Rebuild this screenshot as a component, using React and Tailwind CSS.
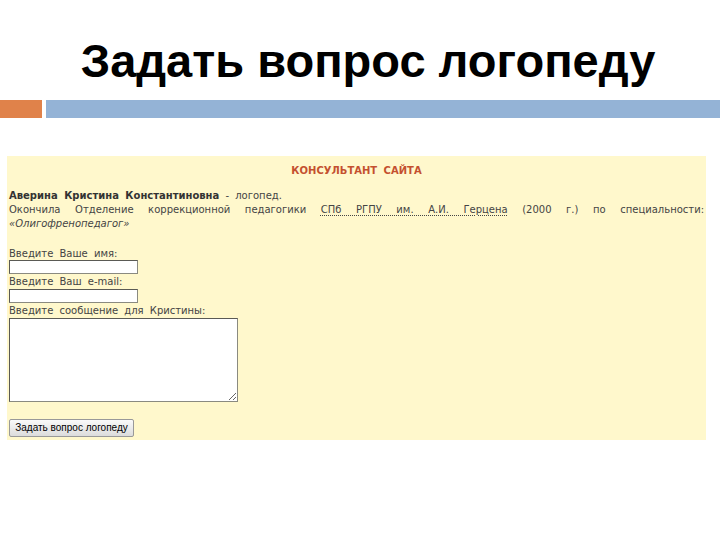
export default function App() {
  const body = "font-['DejaVu_Sans',Verdana,sans-serif] text-[10px] text-[#444] [word-spacing:3px]";
  const field = "bg-white border border-[#8a8a80] border-t-[#5a5a55] border-l-[#5a5a55]";

  return (
    <div className="w-[720px] h-[540px] bg-white overflow-hidden">
      <h1 className="pt-[33px] pl-[16px] h-[100px] text-center font-['Liberation_Sans',Arial,sans-serif] font-bold text-[47px] leading-[56px] text-black">
        Задать вопрос логопеду
      </h1>

      <div className="flex gap-[4px] h-[18px]">
        <div className="w-[42px] bg-[#e0824a]" />
        <div className="flex-1 bg-[#94b3d6]" />
      </div>

      <div className={`mt-[38px] ml-[7px] w-[699px] h-[284px] bg-[#fff8cc] px-[2px] pt-[8px] ${body}`}>
        <div className="text-center font-bold text-[#c4502f] leading-[14px]">КОНСУЛЬТАНТ САЙТА</div>

        <div className="mt-[11px] leading-[14px]">
          <b className="text-[#333]">Аверина Кристина Константиновна</b> - логопед.
        </div>
        <p className="leading-[14px] text-justify [text-align-last:left]">
          Окончила Отделение коррекционной педагогики{" "}
          <span className="underline decoration-dotted underline-offset-2">СПб РГПУ им. А.И. Герцена</span>{" "}
          (2000 г.) по специальности: <i>«Олигофренопедагог»</i>
        </p>

        <form className="mt-[16px] flex flex-col items-start" onSubmit={(e) => e.preventDefault()}>
          <label className="leading-[13px]">Введите Ваше имя:</label>
          <input className={`w-[129px] h-[14px] ${field}`} />
          <label className="leading-[15px]">Введите Ваш e-mail:</label>
          <input className={`w-[129px] h-[14px] ${field}`} />
          <label className="leading-[15px]">Введите сообщение для Кристины:</label>
          <textarea className={`w-[229px] h-[84px] resize ${field}`} />
          <button
            type="submit"
            className="mt-[17px] h-[18px] w-[125px] border border-[#999] rounded-[2px] bg-gradient-to-b from-[#fafafa] to-[#dcdcdc] font-['Liberation_Sans',Arial,sans-serif] text-[10px] text-black [word-spacing:0px] leading-[14px]"
          >
            Задать вопрос логопеду
          </button>
        </form>
      </div>
    </div>
  );
}
